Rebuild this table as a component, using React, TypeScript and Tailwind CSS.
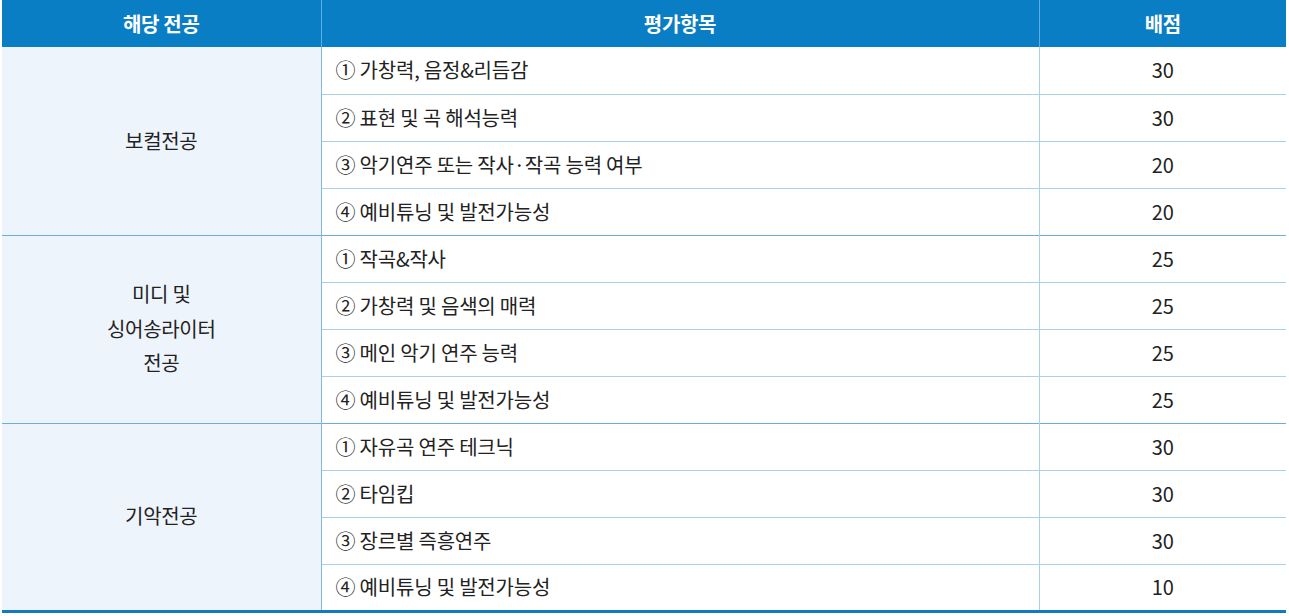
import React from "react";

const groups = [
  {
    name: ["보컬전공"],
    items: [
      ["① 가창력, 음정&리듬감", "30"],
      ["② 표현 및 곡 해석능력", "30"],
      ["③ 악기연주 또는 작사·작곡 능력 여부", "20"],
      ["④ 예비튜닝 및 발전가능성", "20"],
    ],
  },
  {
    name: ["미디 및", "싱어송라이터", "전공"],
    items: [
      ["① 작곡&작사", "25"],
      ["② 가창력 및 음색의 매력", "25"],
      ["③ 메인 악기 연주 능력", "25"],
      ["④ 예비튜닝 및 발전가능성", "25"],
    ],
  },
  {
    name: ["기악전공"],
    items: [
      ["① 자유곡 연주 테크닉", "30"],
      ["② 타임킵", "30"],
      ["③ 장르별 즉흥연주", "30"],
      ["④ 예비튜닝 및 발전가능성", "10"],
    ],
  },
];

export default function App() {
  return (
    <div
      className="w-[1289px] h-[616px] bg-white px-[2px] text-[#222]"
      style={{ fontFamily: '"Noto Sans CJK KR", "Noto Sans", sans-serif' }}
    >
      <table className="w-[1284px] border-collapse table-fixed border-b-[3px] border-b-[#1479bd]">
        <colgroup>
          <col className="w-[319px]" />
          <col className="w-[718px]" />
          <col />
        </colgroup>
        <thead>
          <tr className="h-[47px] bg-[#0a7ec4] text-white text-[20px] font-bold">
            <th className="border-r border-r-[#5aaee6] font-bold tracking-[-0.3px]">해당 전공</th>
            <th className="border-r border-r-[#5aaee6] font-bold tracking-[-0.3px]">평가항목</th>
            <th className="font-bold tracking-[-0.3px]">배점</th>
          </tr>
        </thead>
        <tbody>
          {groups.map((g, gi) =>
            g.items.map((it, ii) => (
              <tr
                key={`${gi}-${ii}`}
                className={`h-[47px] text-[20px] ${
                  ii === 3 && gi !== 2 ? "border-b border-b-[#6aafd8]" : ii === 3 ? "" : "border-b border-b-[#a9d2ea]"
                }`}
              >
                {ii === 0 && (
                  <td
                    rowSpan={4}
                    className="bg-[#eef4fb] border-r border-r-[#7fb9dc] text-center align-middle leading-[34.5px] tracking-[-0.3px]"
                  >
                    {g.name.map((n) => (
                      <div key={n}>{n}</div>
                    ))}
                  </td>
                )}
                <td className="border-r border-r-[#a9d2ea] pl-[14px] tracking-[-0.2px]">{it[0]}</td>
                <td className="text-center">{it[1]}</td>
              </tr>
            ))
          )}
        </tbody>
      </table>
    </div>
  );
}
